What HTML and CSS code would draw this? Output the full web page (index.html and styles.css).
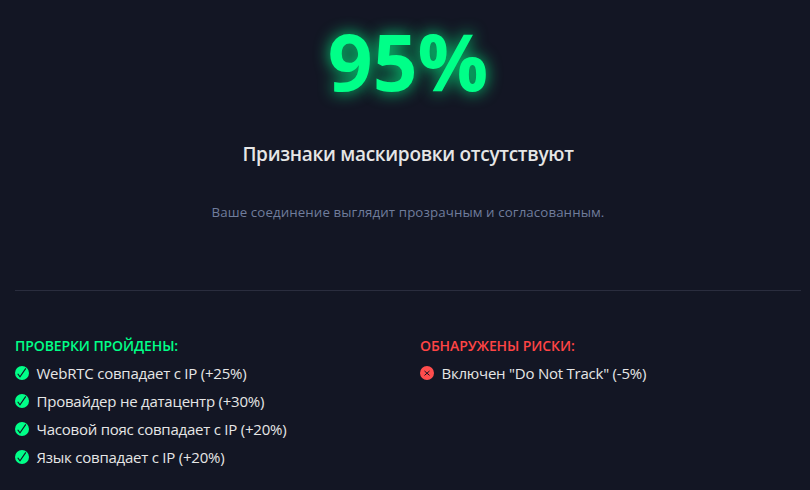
FILE: index.html
```html
<!DOCTYPE html>
<html lang="ru">
<head>
    <meta charset="UTF-8">
    <meta name="viewport" content="width=device-width, initial-scale=1.0">
    <title>Проверка анонимности</title>
    <link rel="stylesheet" href="styles.css">
</head>
<body>
    <svg class="sprite" aria-hidden="true">
        <symbol id="icon-check" viewBox="0 0 14 14">
            <circle cx="7" cy="7" r="7" fill="#00ff88"/>
            <path d="M2.7 7.7 L5 10.9 L10.8 2.4" fill="none" stroke="#131624" stroke-width="1.1"/>
        </symbol>
        <symbol id="icon-cross" viewBox="0 0 14 14">
            <circle cx="7" cy="7" r="7" fill="#ff4d4d"/>
            <path d="M4.5 5 L9.5 9.4 M9.5 5 L4.5 9.4" fill="none" stroke="#131624" stroke-width="1"/>
        </symbol>
    </svg>

    <div class="summary">
        <div class="score">95%</div>
        <h2 class="verdict">Признаки маскировки отсутствуют</h2>
        <p class="description">Ваше соединение выглядит прозрачным и согласованным.</p>
    </div>

    <div class="details">
        <div class="column">
            <h3 class="column-title passed">ПРОВЕРКИ ПРОЙДЕНЫ:</h3>
            <ul class="checks">
                <li><svg class="icon"><use href="#icon-check"/></svg><span>WebRTC совпадает с IP (+25%)</span></li>
                <li><svg class="icon"><use href="#icon-check"/></svg><span>Провайдер не датацентр (+30%)</span></li>
                <li><svg class="icon"><use href="#icon-check"/></svg><span>Часовой пояс совпадает с IP (+20%)</span></li>
                <li><svg class="icon"><use href="#icon-check"/></svg><span>Язык совпадает с IP (+20%)</span></li>
            </ul>
        </div>
        <div class="column">
            <h3 class="column-title risks">ОБНАРУЖЕНЫ РИСКИ:</h3>
            <ul class="checks">
                <li><svg class="icon"><use href="#icon-cross"/></svg><span>Включен "Do Not Track" (-5%)</span></li>
            </ul>
        </div>
    </div>
</body>
</html>
```

FILE: styles.css
```css
:root {
    --background: #131624;
    --text: #e6e6e6;
    --muted: #707d9c;
    --border: #2a2d3e;
    --success: #00ff88;
    --danger: #ff4444;
}

* {
    margin: 0;
    padding: 0;
    box-sizing: border-box;
}

body {
    font-family: 'Segoe UI', 'Open Sans', 'Noto Sans', sans-serif;
    background-color: var(--background);
    color: var(--text);
    height: 490px;
    overflow: hidden;
    padding: 0 9px 0 15px;
}

.sprite {
    display: none;
}

.summary {
    height: 291px;
    padding-top: 21px;
    border-bottom: 1px solid var(--border);
    text-align: center;
}

.score {
    font-size: 78.5px;
    font-weight: 700;
    line-height: 80px;
    color: var(--success);
    text-shadow: 0 0 16px rgba(0, 255, 136, 0.85);
}

.verdict {
    margin-top: 39px;
    font-size: 19px;
    font-weight: 600;
    line-height: 28px;
    letter-spacing: -0.3px;
}

.description {
    margin-top: 34px;
    font-size: 13.3px;
    line-height: 20px;
    letter-spacing: 0.1px;
    color: var(--muted);
}

.details {
    display: grid;
    grid-template-columns: 1fr 1fr;
    gap: 24px;
    padding-top: 45px;
}

.column-title {
    font-size: 14px;
    font-weight: 600;
    line-height: 20px;
    letter-spacing: -0.1px;
    margin-bottom: 3px;
}

.passed {
    color: var(--success);
}

.risks {
    color: var(--danger);
}

.checks {
    list-style: none;
}

.checks li {
    display: flex;
    align-items: center;
    gap: 7.5px;
    height: 28px;
    font-size: 15px;
    letter-spacing: -0.23px;
    white-space: nowrap;
}

.icon {
    width: 14px;
    height: 14px;
    flex-shrink: 0;
}
```
